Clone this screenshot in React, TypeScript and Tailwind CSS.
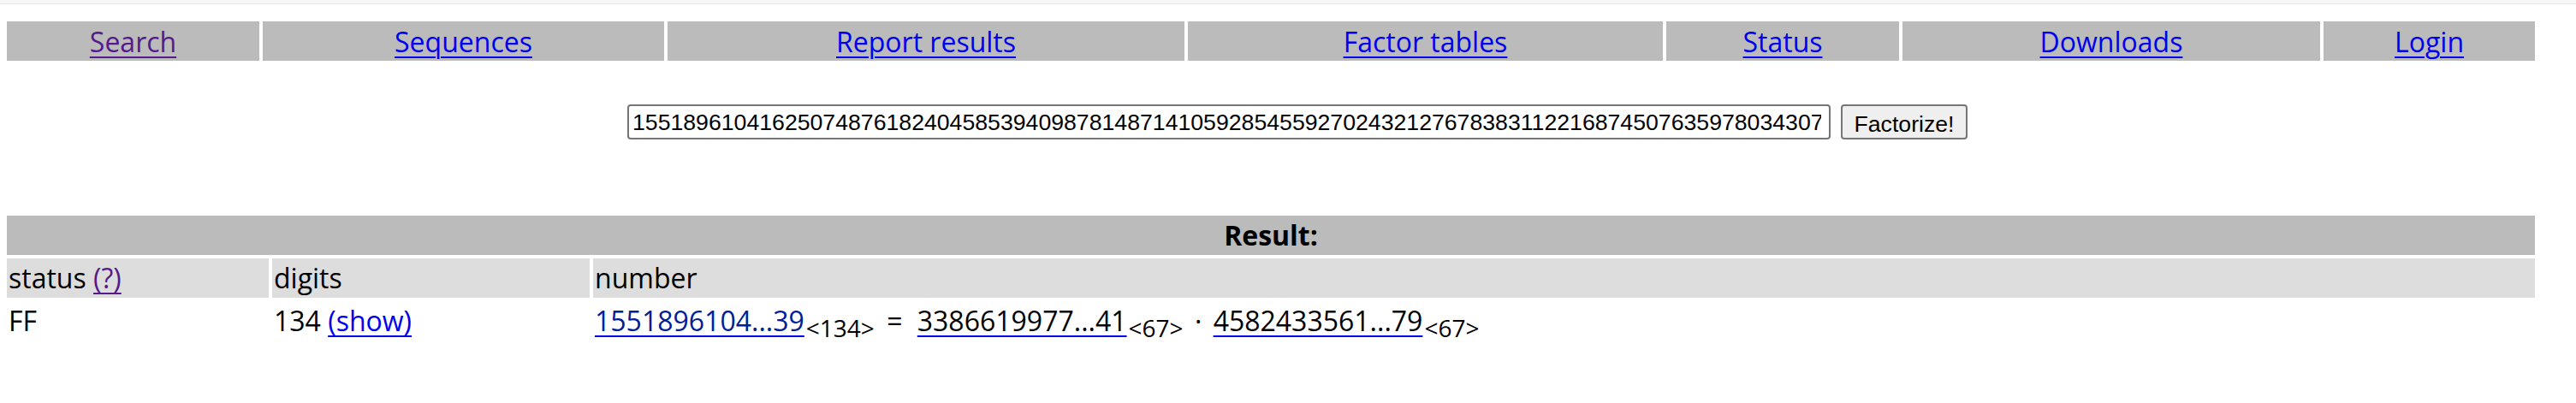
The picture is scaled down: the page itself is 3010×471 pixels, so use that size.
import React from "react";

const NUM =
  "15518961041625074876182404585394098781487141059285455927024321276783831122168745076359780343075194821036657720981343506528170942866139";

const navItems: { label: string; visited?: boolean }[] = [
  { label: "Search", visited: true },
  { label: "Sequences" },
  { label: "Report results" },
  { label: "Factor tables" },
  { label: "Status" },
  { label: "Downloads" },
  { label: "Login" },
];

export default function App() {
  return (
    <div className="min-h-[471px] w-[3010px] bg-white font-['Segoe_UI','Open_Sans',sans-serif] text-[32px] leading-[42px] text-black">
      <div className="h-[4px] bg-[#f7f7f7]" />
      <div className="h-px bg-[#e6e6e6]" />

      <div className="pl-[8px]">
        {/* navigation */}
        <div className="mt-[20px] grid w-[2954px] grid-cols-[295px_469px_604px_555px_272px_488px_247px] gap-x-[4px]">
          {navItems.map((n) => (
            <div key={n.label} className="flex h-[46px] items-center justify-center bg-[#bbbbbb] pt-[2px]">
              <a
                href="#"
                className={
                  n.visited
                    ? "text-[#551a8b] underline decoration-2 underline-offset-[5px]"
                    : "text-[#0000ee] underline decoration-2 underline-offset-[5px]"
                }
              >
                {n.label}
              </a>
            </div>
          ))}
        </div>

        {/* search form */}
        <div className="mt-[51px] flex items-center pl-[725px]">
          <input
            readOnly
            value={NUM}
            className="h-[41px] w-[1406px] rounded-[4px] border-2 border-[#767676] bg-white pl-[4px] pr-[9px] font-['Liberation_Sans',Arial,sans-serif] text-[26.67px] text-black outline-none"
          />
          <button className="ml-[12px] h-[41px] w-[148px] rounded-[4px] border-2 border-[#767676] bg-[#efefef] font-['Liberation_Sans',Arial,sans-serif] text-[26.67px] text-black">
            Factorize!
          </button>
        </div>

        {/* result table */}
        <div className="mt-[89px] flex w-[2954px] flex-col gap-y-[4px]">
          <div className="flex h-[46px] items-center justify-center bg-[#bbbbbb] font-bold">Result:</div>
          <div className="grid grid-cols-[306px_371px_2269px] gap-x-[4px]">
            <div className="flex h-[46px] items-center bg-[#dddddd] px-[2px]">
              status&nbsp;
              <a href="#" className="text-[#551a8b] underline decoration-2 underline-offset-[5px]">
                (?)
              </a>
            </div>
            <div className="flex h-[46px] items-center bg-[#dddddd] px-[2px]">digits</div>
            <div className="flex h-[46px] items-center bg-[#dddddd] px-[2px]">number</div>
          </div>
          <div className="grid grid-cols-[306px_371px_2269px] gap-x-[4px]">
            <div className="flex h-[46px] items-center px-[2px]">FF</div>
            <div className="flex h-[46px] items-center px-[2px]">
              134&nbsp;
              <a href="#" className="text-[#0000ee] underline decoration-2 underline-offset-[5px]">
                (show)
              </a>
            </div>
            <div className="flex h-[46px] items-center whitespace-pre px-[2px]">
              <a href="#" className="text-[#002099] underline decoration-[#0000ee] decoration-2 underline-offset-[5px]">
                1551896104...39
              </a>
              <sub className="relative top-[8px] ml-[2px] text-[28px]">&lt;134&gt;</sub>
              <span className="ml-[6px] mr-[9px]"> = </span>
              <a href="#" className="text-black underline decoration-[#0000ee] decoration-2 underline-offset-[5px]">
                3386619977...41
              </a>
              <sub className="relative top-[8px] ml-[2px] text-[28px]">&lt;67&gt;</sub>
              <span className="mx-[5px]"> · </span>
              <a href="#" className="text-black underline decoration-[#0000ee] decoration-2 underline-offset-[5px]">
                4582433561...79
              </a>
              <sub className="relative top-[8px] ml-[2px] text-[28px]">&lt;67&gt;</sub>
            </div>
          </div>
        </div>
      </div>
    </div>
  );
}
